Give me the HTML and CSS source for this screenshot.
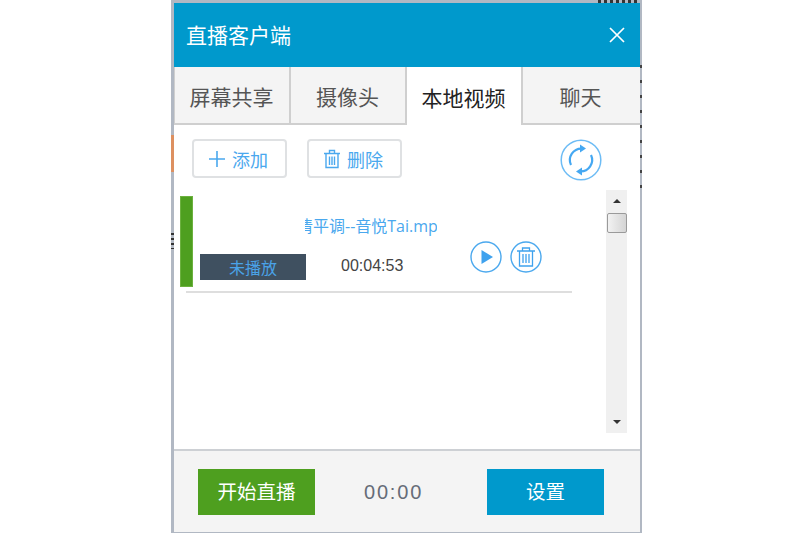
FILE: index.html
```html
<!DOCTYPE html>
<html lang="zh-CN">
<head>
<meta charset="utf-8">
<title>直播客户端</title>
<link rel="stylesheet" href="styles.css">
</head>
<body>
<div class="window">
  <header class="titlebar">
    <span class="title">直播客户端</span>
    <svg class="close" viewBox="0 0 16 16" width="16" height="16"><path d="M1 1 L15 15 M15 1 L1 15" stroke="#fff" stroke-width="1.7" fill="none"/></svg>
  </header>
  <nav class="tabs">
    <div class="tab t1">屏幕共享</div>
    <div class="tab t2">摄像头</div>
    <div class="tab t3 active">本地视频</div>
    <div class="tab t4">聊天</div>
  </nav>
  <section class="toolbar">
    <button class="tool">
      <svg viewBox="0 0 18 18" width="18" height="18"><path d="M9 1 V17 M1 9 H17" stroke="#4aa8ee" stroke-width="1.6" fill="none"/></svg>
      <span>添加</span>
    </button>
    <button class="tool">
      <svg viewBox="0 0 18 20" width="18" height="20"><path d="M1 4.5 H17 M6.5 4 V1.5 H11.5 V4 M3 5 V18.5 H15 V5 M6.5 7.5 V16 M9 7.5 V16 M11.5 7.5 V16" stroke="#4aa8ee" stroke-width="1.4" fill="none"/></svg>
      <span>删除</span>
    </button>
    <svg class="refresh" viewBox="0 0 42 42" width="42" height="42">
      <circle cx="21" cy="21" r="19.8" stroke="#6dbcf5" stroke-width="1.5" fill="#fff"/>
      <path d="M11 26 A11.5 11.5 0 0 1 22 9.6 M31 16 A11.5 11.5 0 0 1 20 32.4" stroke="#45a8f2" stroke-width="2.2" fill="none"/>
      <path d="M20 5.5 L26 9.5 L20 13.5 Z M22 28.5 L16 32.5 L22 36.5 Z" fill="#45a8f2"/>
    </svg>
  </section>
  <section class="list">
    <div class="items">
      <article class="item">
        <div class="bar"></div>
        <div class="info">
          <div class="name"><span>清平调--音悦Tai.mp4</span></div>
          <div class="meta">
            <span class="status">未播放</span>
            <span class="duration">00:04:53</span>
            <svg class="act play" viewBox="0 0 32 32" width="32" height="32"><circle cx="16" cy="16" r="15" stroke="#4aa8ee" stroke-width="1.4" fill="none"/><path d="M11.5 9 L23 16 L11.5 23 Z" fill="#3fa2ee"/></svg>
            <svg class="act" viewBox="0 0 32 32" width="32" height="32"><circle cx="16" cy="16" r="15" stroke="#4aa8ee" stroke-width="1.4" fill="none"/><path d="M7 10 H25 M12.5 10 V7 H19.5 V10 M9.5 10.5 V25 H22.5 V10.5 M13 13 V22 M16 13 V22 M19 13 V22" stroke="#3fa2ee" stroke-width="1.3" fill="none"/></svg>
          </div>
        </div>
      </article>
      <div class="divider"></div>
    </div>
    <aside class="scrollbar">
      <div class="arrow up"></div>
      <div class="thumb"></div>
      <div class="track"></div>
      <div class="arrow down"></div>
    </aside>
  </section>
  <footer class="footer">
    <button class="cta go">开始直播</button>
    <span class="timer">00:00</span>
    <button class="cta set">设置</button>
  </footer>
  <i class="speck orange"></i>
  <i class="speck dark-l"></i>
  <i class="speck dark-r"></i>
  <i class="speck dark-t"></i>
</div>
</body>
</html>
```
FILE: styles.css
```css
* { box-sizing: border-box; }
html, body { margin: 0; height: 100%; background: #fff; overflow: hidden; }
body { font-family: "Liberation Sans", "Noto Sans CJK SC", sans-serif; }
.window {
  position: relative;
  width: 471px;
  height: 533px;
  margin-left: 171px;
  border: solid #b1b8c3;
  border-width: 3px 2px 1px 3px;
  background: #fff;
  display: flex;
  flex-direction: column;
}
.titlebar {
  height: 64px;
  background: #0099cc;
  color: #fff;
  display: flex;
  align-items: center;
  justify-content: space-between;
  padding: 0 15px 0 13px;
}
.title { font: 21px "Noto Sans CJK SC", sans-serif; padding-bottom: 3px; margin-left: -1px; }
.tabs { display: flex; height: 58px; }
.tab {
  width: 116px;
  background: #f4f4f4;
  border-right: 2px solid #cfcfcf;
  border-bottom: 2px solid #cfcfcf;
  display: flex;
  align-items: center;
  justify-content: center;
  font: 21px "Noto Sans CJK SC", sans-serif;
  color: #555;
  padding: 2px 1px 0 0;
}
.t1 { width: 117px; border-left: 1px solid #cfcfcf; }
.t3 { background: #fff; border-bottom: 0; color: #222; border-right-color: #cfcfcf; }
.t4 { flex: 1; border-right: 0; padding-right: 2px; }
.toolbar {
  height: 65px;
  display: flex;
  align-items: flex-start;
  padding: 14px 0 0 18px;
  gap: 20px;
}
.tool {
  width: 95px;
  height: 39px;
  background: #fff;
  border: 2px solid #dfe1e3;
  border-radius: 4px;
  color: #4aa8ee;
  display: flex;
  align-items: center;
  justify-content: center;
  gap: 6px;
  padding: 0 3px 0 0;
  font: 18px "Noto Sans CJK SC", sans-serif;
}
.refresh { margin: 0 0 0 138px; align-self: flex-start; }
.list { flex: 1; display: flex; min-height: 0; padding-bottom: 16px; }
.items { width: 432px; padding: 6px 0 0 6px; }
.item { display: flex; height: 91px; }
.bar { width: 13px; background: #4e9f1f; border: 1px solid #6cb13f; }
.info { flex: 1; padding-left: 7px; display: flex; flex-direction: column; }
.name {
  width: 132px;
  height: 58px;
  margin-left: 105px;
  overflow: hidden;
  display: flex;
  justify-content: flex-end;
  align-items: center;
  padding-bottom: 1px;
  color: #4aa8ee;
  font: 16px "Open Sans", "Noto Sans CJK SC", sans-serif;
  white-space: nowrap;
}
.name span { flex: none; margin-right: -10px; }
.meta { display: flex; align-items: center; height: 26px; }
.status {
  width: 106px;
  height: 26px;
  background: #3f5060;
  color: #4aa3e8;
  font: 16px/26px "Noto Sans CJK SC", sans-serif;
  text-align: center;
}
.duration {
  width: 64px;
  margin-left: 35px;
  color: #444;
  font-size: 16px;
  margin-top: -2px;
}
.play { margin-left: 65px; }
.act { flex: none; margin-right: 8px; position: relative; top: -10px; }
.divider { height: 2px; margin: 4px 0 0 6px; width: 386px; background: #dedede; }
.scrollbar {
  width: 21px;
  height: 243px;
  background: #f0f0f0;
  display: flex;
  flex-direction: column;
  align-items: center;
}
.arrow { flex: none; height: 23px; width: 100%; position: relative; }
.arrow::after {
  content: "";
  position: absolute;
  left: 6.5px;
  width: 0;
  height: 0;
  border-left: 4.5px solid transparent;
  border-right: 4.5px solid transparent;
}
.up::after { top: 9px; border-bottom: 4px solid #333; }
.down::after { top: 10px; border-top: 4px solid #333; }
.thumb {
  flex: none;
  width: 20px;
  height: 20px;
  border: 1px solid #9a9a9a;
  border-radius: 2px;
  background: linear-gradient(90deg, #f2f2f2, #d4d4d4);
}
.track { flex: 1; }
.footer {
  flex: none;
  height: 83px;
  background: #f4f4f4;
  border-top: 2px solid #cdd0d4;
  display: flex;
  align-items: flex-start;
  padding: 18px 0 0 24px;
}
.cta {
  width: 117px;
  height: 46px;
  border: 0;
  padding: 0 0 3px;
  color: #fff;
  font: 19.5px "Noto Sans CJK SC", sans-serif;
}
.go { background: #4e9f1f; }
.set { background: #0099cc; }
.timer {
  width: 172px;
  padding-left: 49px;
  line-height: 47px;
  font-size: 20px;
  letter-spacing: 1.8px;
  color: #666c78;
}
.speck { position: absolute; display: block; width: 3px; left: -3px; }
.orange { top: 132px; height: 37px; background: #dd9060; }
.dark-l { top: 230px; height: 16px; background: repeating-linear-gradient(#333 0 2px, #b1b8c3 2px 5px); }
.dark-r { left: auto; right: -2px; width: 2px; top: 62px; height: 130px; background: repeating-linear-gradient(#444 0 3px, #b1b8c3 3px 15px); }
.dark-t { left: 424px; top: -3px; width: 40px; height: 3px; background: repeating-linear-gradient(90deg, #333 0 3px, #b1b8c3 3px 6px); }
```
